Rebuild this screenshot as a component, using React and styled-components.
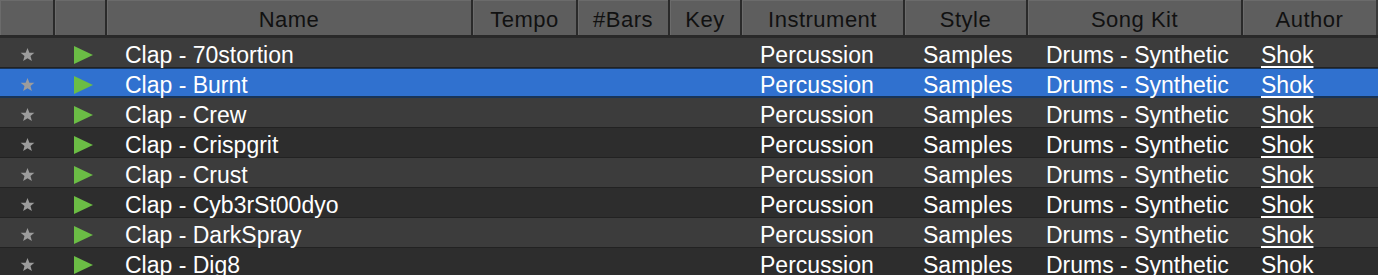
import React from 'react';
import styled, { createGlobalStyle } from 'styled-components';

const GlobalStyle = createGlobalStyle`
  html, body {
    margin: 0;
    padding: 0;
    background: #2d2d2d;
    overflow: hidden;
  }
  body {
    font-family: "Liberation Sans", Arial, sans-serif;
  }
`;

const COLUMNS = '55px 52px 366px 105px 92px 72px 163px 123px 215px 135px';

const Table = styled.div`
  width: 1378px;
  display: flex;
  flex-direction: column;
`;

const HeaderRow = styled.div`
  display: grid;
  grid-template-columns: ${COLUMNS};
  border-bottom: 3px solid #292929;
`;

const HeaderCell = styled.div`
  box-sizing: border-box;
  height: 35px;
  padding-top: 5px;
  line-height: 29px;
  font-size: 22px;
  letter-spacing: 0.5px;
  color: #111;
  text-align: center;
  background: #5e5e5e;
  border-right: 2px solid #2a2a2a;
  box-shadow: inset 1px 1px 0 #6b6b6b;
  white-space: nowrap;
  &:last-child {
    border-right: 2px solid #3a3a3a;
  }
`;

const Row = styled.div`
  display: grid;
  grid-template-columns: ${COLUMNS};
  height: 30px;
  background: ${(p) => (p.$selected ? '#3071cf' : p.$odd ? '#3c3c3c' : '#2d2d2d')};
  box-shadow: ${(p) =>
    p.$selected
      ? 'inset 0 1px 0 #183457, inset 0 -2px 0 #183457'
      : 'inset 0 -1px 0 #222'};
`;

const Cell = styled.div`
  box-sizing: border-box;
  height: 30px;
  padding: 5px 0 0 18px;
  line-height: 24px;
  font-size: 23px;
  color: #fff;
  white-space: nowrap;
  overflow: hidden;
`;

const IconCell = styled.div`
  display: flex;
  align-items: center;
  justify-content: center;
  height: 30px;
  padding-top: 3px;
  padding-left: ${(p) => p.$shift || 0}px;
  box-sizing: border-box;
`;

const AuthorLink = styled.span`
  text-decoration: underline;
  text-decoration-thickness: 2px;
  text-underline-offset: 3px;
`;

const Star = () => (
  <svg width="15" height="15" viewBox="0 0 24 24">
    <polygon
      points="12,1.5 15,9 23,9.3 16.8,14.3 19,22.3 12,17.8 5,22.3 7.2,14.3 1,9.3 9,9"
      fill="#9c9c9c"
    />
  </svg>
);

const Play = () => (
  <svg width="19" height="18" viewBox="0 0 19 18">
    <polygon points="0,0 19,9 0,18" fill="#6bbd45" />
  </svg>
);

const headers = ['', '', 'Name', 'Tempo', '#Bars', 'Key', 'Instrument', 'Style', 'Song Kit', 'Author'];

const names = [
  'Clap - 70stortion',
  'Clap - Burnt',
  'Clap - Crew',
  'Clap - Crispgrit',
  'Clap - Crust',
  'Clap - Cyb3rSt00dyo',
  'Clap - DarkSpray',
  'Clap - Dig8',
];

export default function App() {
  return (
    <>
      <GlobalStyle />
      <Table>
        <HeaderRow>
          {headers.map((h, i) => (
            <HeaderCell key={i}>{h}</HeaderCell>
          ))}
        </HeaderRow>
        {names.map((name, i) => (
          <Row key={name} $odd={i % 2 === 0} $selected={i === 1}>
            <IconCell>
              <Star />
            </IconCell>
            <IconCell $shift={4}>
              <Play />
            </IconCell>
            <Cell>{name}</Cell>
            <Cell />
            <Cell />
            <Cell />
            <Cell>Percussion</Cell>
            <Cell>Samples</Cell>
            <Cell>Drums - Synthetic</Cell>
            <Cell>
              <AuthorLink>Shok</AuthorLink>
            </Cell>
          </Row>
        ))}
      </Table>
    </>
  );
}
